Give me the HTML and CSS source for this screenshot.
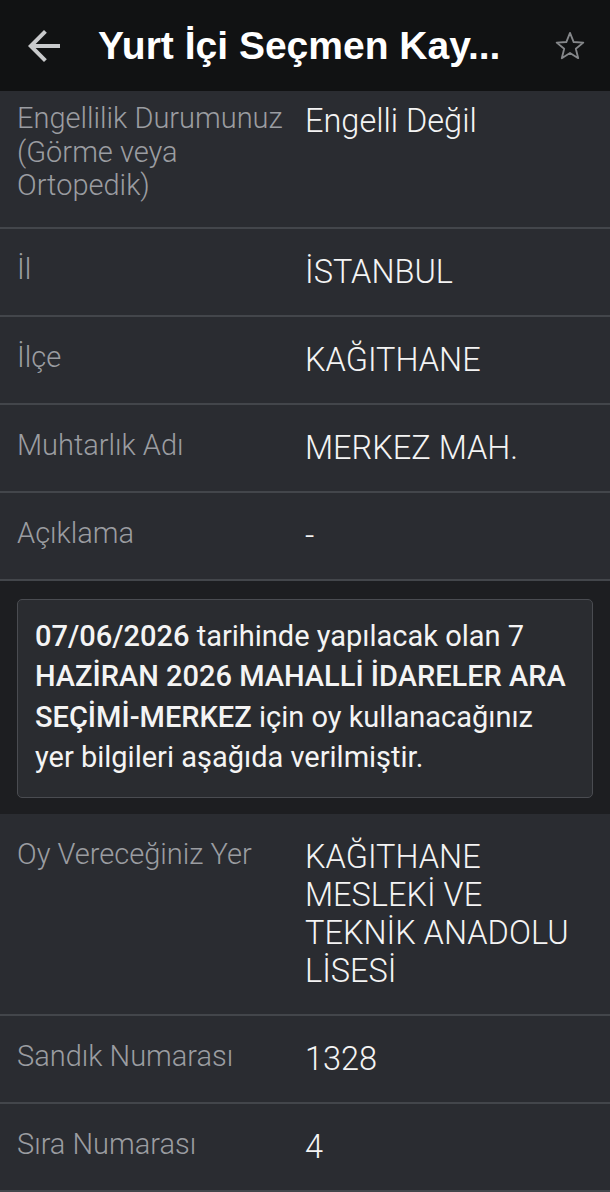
FILE: index.html
```html
<!DOCTYPE html>
<html lang="tr">
<head>
    <meta charset="UTF-8">
    <meta name="viewport" content="width=device-width, initial-scale=1.0">
    <title>Yurt İçi Seçmen Kaydı</title>
    <link rel="stylesheet" href="styles.css">
</head>
<body>
    <header class="topbar">
        <button class="icon-btn back" aria-label="Geri">
            <svg width="48" height="48" viewBox="0 0 24 24"><path d="M20 11H7.83l5.59-5.59L12 4l-8 8 8 8 1.41-1.41L7.83 13H20v-2z" fill="currentColor"/></svg>
        </button>
        <h1 class="title">Yurt İçi Seçmen Kay...</h1>
        <button class="icon-btn star" aria-label="Favori">
            <svg width="34" height="34" viewBox="0 0 24 24"><polygon points="12,2.8 14.6,9.2 21.4,9.6 16.1,13.9 17.8,20.6 12,16.9 6.2,20.6 7.9,13.9 2.6,9.6 9.4,9.2" fill="none" stroke="currentColor" stroke-width="1.3" stroke-linejoin="round"/></svg>
        </button>
    </header>

    <main class="content">
        <div class="list list-scrolled">
            <div class="row">
                <div class="label">Engellilik Durumunuz (Görme veya Ortopedik)</div>
                <div class="value">Engelli Değil</div>
            </div>
            <div class="row">
                <div class="label">İl</div>
                <div class="value">İSTANBUL</div>
            </div>
            <div class="row">
                <div class="label">İlçe</div>
                <div class="value">KAĞITHANE</div>
            </div>
            <div class="row">
                <div class="label">Muhtarlık Adı</div>
                <div class="value">MERKEZ MAH.</div>
            </div>
            <div class="row">
                <div class="label">Açıklama</div>
                <div class="value">-</div>
            </div>
        </div>

        <section class="notice">
            <div class="notice-box">
                <b>07/06/2026</b> tarihinde yapılacak olan 7 <b>HAZİRAN 2026 MAHALLİ İDARELER ARA SEÇİMİ-MERKEZ</b> için oy kullanacağınız yer bilgileri aşağıda verilmiştir.
            </div>
        </section>

        <div class="list">
            <div class="row">
                <div class="label">Oy Vereceğiniz Yer</div>
                <div class="value">KAĞITHANE MESLEKİ VE TEKNİK ANADOLU LİSESİ</div>
            </div>
            <div class="row">
                <div class="label">Sandık Numarası</div>
                <div class="value">1328</div>
            </div>
            <div class="row">
                <div class="label">Sıra Numarası</div>
                <div class="value">4</div>
            </div>
        </div>
    </main>
</body>
</html>
```

FILE: styles.css
```css
body {
    margin: 0;
    padding: 0;
    font-family: Roboto, 'Noto Sans', sans-serif;
    background-color: #2a2c31;
    color: #f2f2f2;
    height: 100vh;
    overflow: hidden;
    display: flex;
    flex-direction: column;
}

.topbar {
    height: 91px;
    flex-shrink: 0;
    background-color: #111213;
    display: flex;
    align-items: center;
    position: relative;
    z-index: 1;
}

.icon-btn {
    background: none;
    border: none;
    padding: 0;
    display: flex;
    cursor: pointer;
}

.icon-btn.back {
    color: #c9cacc;
    margin-left: 20px;
}

.icon-btn.star {
    color: #85878a;
    margin-left: auto;
    margin-right: 23px;
}

.title {
    margin: 0 0 0 30px;
    font-family: 'Liberation Sans', Arial, sans-serif;
    font-size: 39px;
    font-weight: 700;
    color: #ffffff;
    white-space: nowrap;
}

.content {
    flex: 1;
    overflow: hidden;
}

/* list is scrolled a little, first row is cut under the header */
.list-scrolled {
    margin-top: -13px;
}

.row {
    display: grid;
    grid-template-columns: 288px 1fr;
    padding: 24px 32px 24px 17px;
    border-bottom: 2px solid #43464b;
}

.label {
    font-size: 29px;
    line-height: 33.5px;
    font-weight: 300;
    color: #9b9da1;
    padding-right: 8px;
}

.value {
    font-size: 32.5px;
    line-height: 38px;
    font-weight: 300;
    color: #f4f4f4;
}

.notice {
    background-color: #1d1e21;
    padding: 18px 17px 16px 17px;
}

.notice-box {
    background-color: #2a2c30;
    border: 1px solid #4a4c51;
    border-radius: 5px;
    padding: 16px 22px 19px 17px;
    font-size: 29px;
    line-height: 40.5px;
    color: #f4f4f4;
}

.notice-box b {
    font-weight: 500;
}
```
